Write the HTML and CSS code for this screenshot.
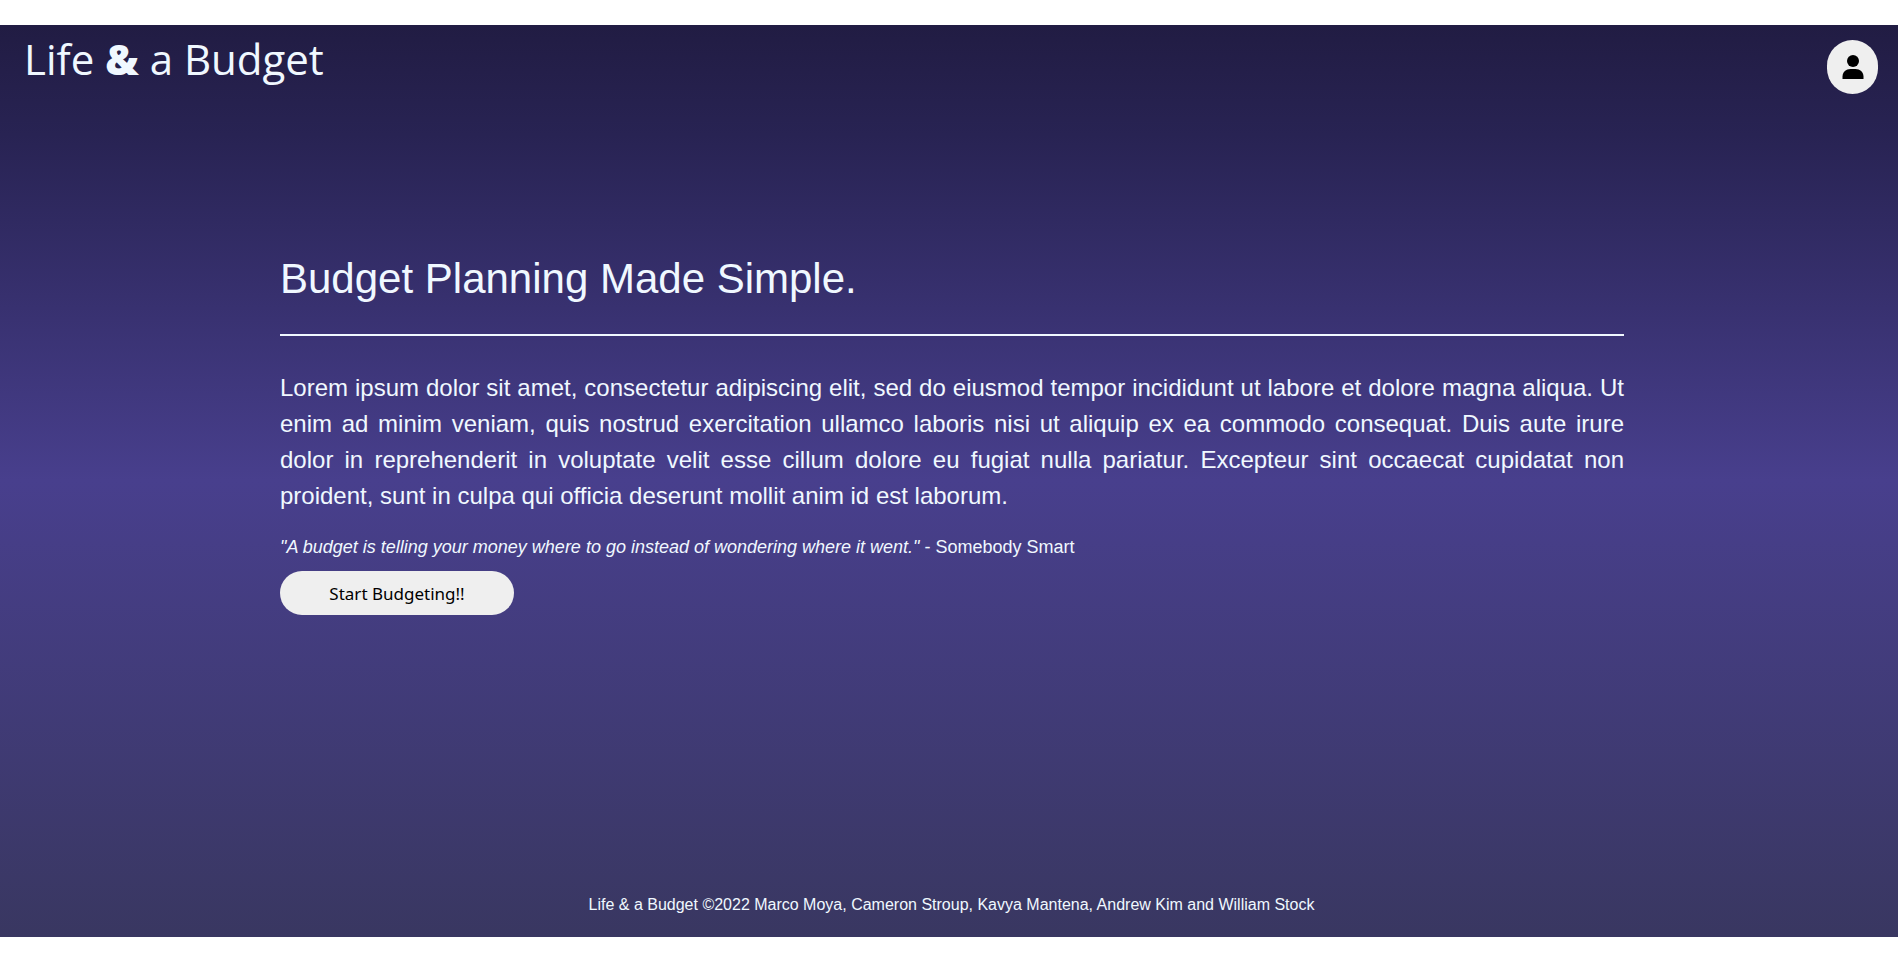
FILE: index.html
```html
<!DOCTYPE html>
<html lang="en">
<head>
<meta charset="utf-8">
<title>Life &amp; a Budget</title>
<link rel="stylesheet" href="styles.css">
</head>
<body>
<div class="page">
  <header class="header">
    <h1 class="brand">Life <b>&amp;</b> a Budget</h1>
    <button class="profile" type="button" aria-label="Profile">
      <svg class="profile-icon" viewBox="0 0 22 26" aria-hidden="true"><circle cx="11" cy="7" r="6"/><path d="M0.500 25v-2.500C0.500 18 4 15 8.500 15h5C18 15 21.500 18 21.500 22.500V25z"/></svg>
    </button>
  </header>
  <main class="intro">
    <h2 class="headline">Budget Planning Made Simple.</h2>
    <hr class="rule">
    <p class="lead">Lorem ipsum dolor sit amet, consectetur adipiscing elit, sed do eiusmod tempor incididunt ut labore et dolore magna aliqua. Ut enim ad minim veniam, quis nostrud exercitation ullamco laboris nisi ut aliquip ex ea commodo consequat. Duis aute irure dolor in reprehenderit in voluptate velit esse cillum dolore eu fugiat nulla pariatur. Excepteur sint occaecat cupidatat non proident, sunt in culpa qui officia deserunt mollit anim id est laborum.</p>
    <p class="quote"><i>"A budget is telling your money where to go instead of wondering where it went."</i> - Somebody Smart</p>
    <button class="start" type="button">Start Budgeting!!</button>
  </main>
  <footer class="footer">Life &amp; a Budget ©2022 Marco Moya, Cameron Stroup, Kavya Mantena, Andrew Kim and William Stock</footer>
</div>
</body>
</html>
```
FILE: styles.css
```css
* { box-sizing: border-box; }
body {
  margin: 0;
  background: #fff;
  color: aliceblue;
  font-family: "Liberation Sans", Arial, sans-serif;
}
.page {
  display: flex;
  flex-direction: column;
  min-height: calc(100vh - 45px);
  margin: 25px 0 20px;
  background: linear-gradient(#211c43, #282353 12%, #483f8d 50%, #393761);
}
.header {
  display: flex;
  justify-content: space-between;
  align-items: flex-start;
  padding: 4px 20px 0 24px;
}
.brand {
  margin: 0;
  font: 400 42px/60px "Open Sans", sans-serif;
}
.brand b { font-weight: 800; }
.profile {
  display: grid;
  place-items: center;
  width: 51px;
  height: 54px;
  margin-top: 11px;
  padding: 0;
  border: 0;
  border-radius: 26px;
  background: #efefef;
}
.profile-icon { width: 22px; height: 26px; }
.intro {
  flex: 1;
  padding: 161px 274px 0 280px;
}
.headline {
  margin: 0;
  font-size: 42px;
  font-weight: 400;
  line-height: 48px;
}
.rule {
  height: 2px;
  margin: 31px 0 34px;
  border: 0;
  background: aliceblue;
}
.lead {
  margin: 0;
  font-size: 24px;
  line-height: 36px;
  text-align: justify;
}
.quote {
  margin: 20px 0 11px;
  font-size: 18px;
  line-height: 26px;
}
.start {
  width: 234px;
  height: 44px;
  border: 0;
  border-radius: 22px;
  background: #efefef;
  color: #000;
  font: 400 17px "Noto Sans", sans-serif;
}
.footer {
  padding: 0 0 20px 5px;
  text-align: center;
  font-size: 16px;
  line-height: 24px;
}
```
